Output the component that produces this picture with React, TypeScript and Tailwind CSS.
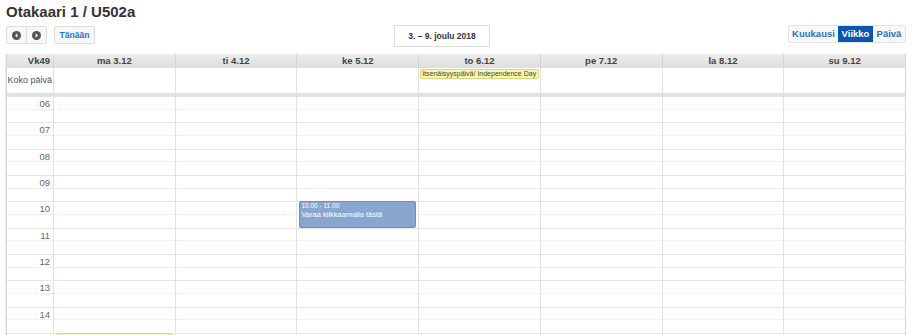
const days = ["ma 3.12", "ti 4.12", "ke 5.12", "to 6.12", "pe 7.12", "la 8.12", "su 9.12"]
const hours = ["06", "07", "08", "09", "10", "11", "12", "13", "14", ""]

function CircleArrow({ dir }: { dir: "left" | "right" }) {
  return (
    <svg width="9" height="9" viewBox="0 0 10 10">
      <circle cx="5" cy="5" r="5" fill="#555" />
      <path
        d={dir === "left" ? "M6 2.6 L3.4 5 L6 7.4 Z" : "M4 2.6 L6.6 5 L4 7.4 Z"}
        fill="#fff"
      />
    </svg>
  )
}

export default function App() {
  return (
    <div className="h-[335px] w-[912px] overflow-hidden bg-white font-['Liberation_Sans',Arial,sans-serif] text-[#333]">
      <div className="px-[6px] pt-[3px]">
        <h1 className="text-[15px] font-bold leading-[18px] text-[#333]">Otakaari 1 / U502a</h1>

        <div className="mt-[4px] flex items-start">
          <div className="mt-[1px] flex">
            <div className="flex rounded-[2px] border border-[#ddd] bg-[#f7f7f7]">
              <button className="flex h-[16px] w-[20px] items-center justify-center border-r border-[#ddd]">
                <CircleArrow dir="left" />
              </button>
              <button className="flex h-[16px] w-[19px] items-center justify-center">
                <CircleArrow dir="right" />
              </button>
            </div>
            <button className="ml-[7px] h-[18px] w-[41px] rounded-[2px] border border-[#ddd] bg-[#f7f7f7] text-[8.5px] font-bold text-[#1a73d9]">
              Tänään
            </button>
          </div>

          <div className="ml-[299px] flex h-[22px] w-[96px] items-center justify-center border border-[#ddd] text-[8.5px] font-bold text-[#333]">
            3. – 9. joulu 2018
          </div>

          <div className="ml-auto flex h-[18px] overflow-hidden rounded-[2px] border border-[#e2e2e2] bg-[#f9f9f9] text-[9.5px] font-bold">
            <span className="flex w-[49px] items-center justify-center text-[#2c6fc2]">Kuukausi</span>
            <span className="flex w-[35px] items-center justify-center bg-[#0b56b0] text-white">Viikko</span>
            <span className="flex w-[32px] items-center justify-center text-[#2c6fc2]">Päivä</span>
          </div>
        </div>

        <div className="mt-[7px] w-[900px] border-x border-[#d6d6d6] shadow-[-1px_0_0_#ececec]">
          <div className="grid h-[14px] grid-cols-[46px_repeat(7,minmax(0,1fr))] bg-gradient-to-b from-[#ececec] to-[#dedede] text-[9.5px] font-bold leading-[14px] text-[#444]">
            <div className="pr-[3px] text-right">Vk49</div>
            {days.map((d) => (
              <div key={d} className="border-l border-[#d4d4d4] text-center">
                {d}
              </div>
            ))}
          </div>

          <div className="grid h-[25px] grid-cols-[46px_repeat(7,minmax(0,1fr))] text-[9.5px]">
            <div className="flex items-center justify-end whitespace-nowrap pr-[1px] text-[9px] text-[#555]">Koko päivä</div>
            {days.map((d, i) => (
              <div key={d} className="min-w-0 border-l border-[#e2e2e2] px-[1px] pt-[1px]">
                {i === 3 && (
                  <div className="h-[10px] truncate rounded-[2px] border border-[#dcd67c] bg-[#fbf7a6] pl-[1px] text-[7px] leading-[8px] text-[#444]">
                    Itsenäisyyspäivä/ Independence Day
                  </div>
                )}
              </div>
            ))}
          </div>

          <div className="h-[3px] bg-[#e0e0e0]" />

          {hours.map((h, r) => (
            <div key={r} className="grid h-[26.33px] grid-cols-[46px_repeat(7,minmax(0,1fr))] border-t border-[#e6e6e6]">
              <div className="flex h-full flex-col">
                <div className="h-1/2 border-b border-dotted border-[#e6e6e6] pr-[3px] pt-[1px] text-right text-[9.5px] leading-[12px] text-[#666]">
                  {h}
                </div>
              </div>
              {days.map((d, i) => (
                <div key={d} className="relative border-l border-[#e2e2e2]">
                  <div className="h-1/2 border-b border-dotted border-[#e6e6e6]" />
                  {h === "10" && i === 2 && (
                    <div className="absolute inset-x-[2px] top-[-1px] h-[26.5px] rounded-[2px] border border-[#6f8fc1] bg-[#8aa6d0] px-[1px] text-white">
                      <div className="text-[6.5px] leading-[8px]">10.00 - 11.00</div>
                      <div className="text-[7.5px] leading-[9px]">Varaa klikkaamalla tästä</div>
                    </div>
                  )}
                  {r === 9 && i === 0 && (
                    <div className="absolute inset-x-[2px] top-[-1px] h-[26px] rounded-[2px] border border-[#dcd67c] bg-[#fbf7a6]" />
                  )}
                </div>
              ))}
            </div>
          ))}
        </div>
      </div>
    </div>
  )
}
